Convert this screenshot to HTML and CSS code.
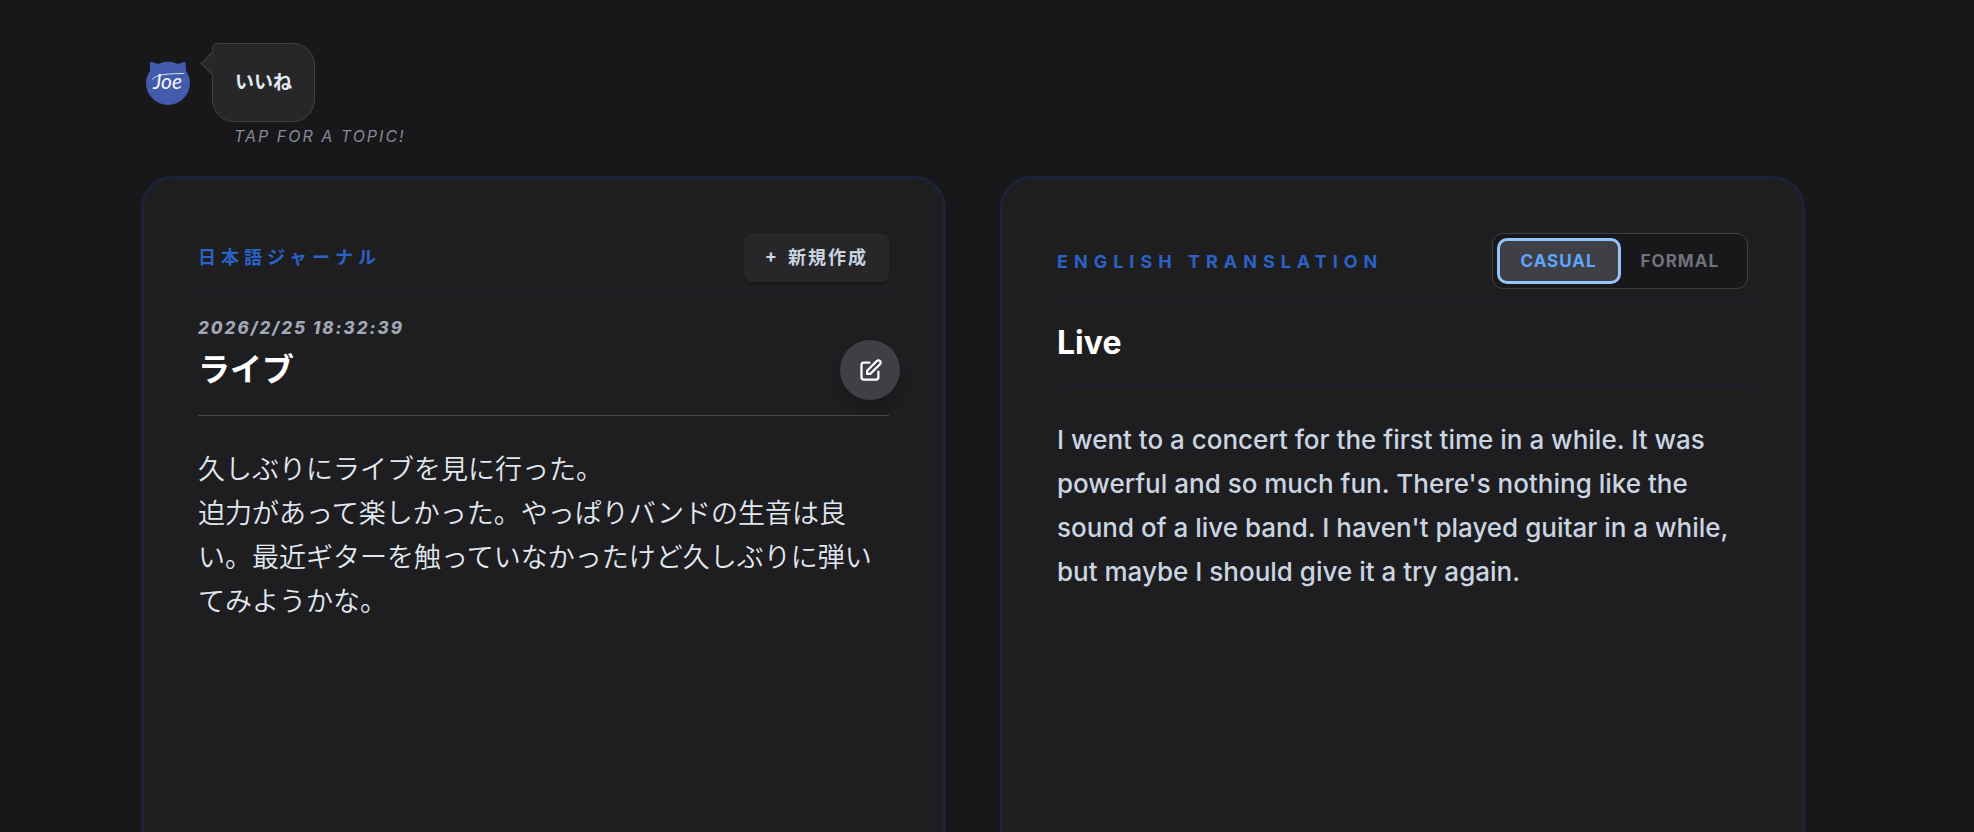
FILE: index.html
```
<!DOCTYPE html>
<html lang="ja">
<head>
<meta charset="utf-8">
<meta name="viewport" content="width=device-width, initial-scale=1">
<title>日本語ジャーナル</title>
<link rel="stylesheet" href="styles.css">
</head>
<body>
<div class="app">
  <header class="prompt">
    <svg class="avatar" viewBox="0 0 46 46" role="img" aria-label="Joe">
      <path class="avatar-face" d="M5 2Q9 2 13 4Q23-1 33 4Q37 2 40.500 2L41 11Q45 17 45 23A22 22 0 0 1 1 23Q1 17 5 11Z"/>
      <path class="avatar-stroke" d="M7.500 19Q11 15.500 19 14.500T39 13.500"/>
      <text class="avatar-name" x="8" y="29">Joe</text>
    </svg>
    <div class="prompt-body">
      <button class="bubble" type="button">いいね</button>
      <p class="hint">TAP FOR A TOPIC!</p>
    </div>
  </header>

  <main class="panels">
    <section class="card">
      <div class="card-head">
        <h2 class="label label-ja">日本語ジャーナル</h2>
        <button class="new-entry" type="button"><span>+</span><span>新規作成</span></button>
      </div>
      <div class="entry-head">
        <time class="date">2026/2/25 18:32:39</time>
        <div class="title-row">
          <h1 class="title">ライブ</h1>
          <button class="edit" type="button" aria-label="編集">
            <svg viewBox="0 0 24 24" aria-hidden="true"><path d="M11 5H6a2 2 0 0 0-2 2v11a2 2 0 0 0 2 2h11a2 2 0 0 0 2-2v-5m-1.414-9.414a2 2 0 1 1 2.828 2.828L11.828 15H9v-2.828z"/></svg>
          </button>
        </div>
      </div>
      <p class="text text-ja">久しぶりにライブを見に行った。<br>迫力があって楽しかった。やっぱりバンドの生音は良い。最近ギターを触っていなかったけど久しぶりに弾いてみようかな。</p>
    </section>

    <section class="card" lang="en">
      <div class="card-head">
        <h2 class="label label-en">ENGLISH TRANSLATION</h2>
        <div class="toggle">
          <button class="option option-active" type="button" aria-pressed="true">CASUAL</button>
          <button class="option" type="button" aria-pressed="false">FORMAL</button>
        </div>
      </div>
      <div class="entry-head entry-head-en">
        <h1 class="title">Live</h1>
      </div>
      <p class="text text-en">I went to a concert for the first time in a while. It was powerful and so much fun. There's nothing like the sound of a live band. I haven't played guitar in a while, but maybe I should give it a try again.</p>
    </section>
  </main>
</div>
</body>
</html>
```
FILE: styles.css
```
* { box-sizing: border-box; }

body {
  margin: 0;
  height: 100vh;
  overflow-x: hidden;
  overflow-y: auto;
  scrollbar-width: none;
  padding-right: 28px;
  background: #18181a;
  color: #e2e8f0;
  font-family: Inter, "Noto Sans CJK JP", sans-serif;
}

h1, h2, p { margin: 0; }

button {
  border: 0;
  font: inherit;
  color: inherit;
  cursor: pointer;
}

.app {
  max-width: 1664px;
  margin: 0 auto;
  padding-top: 43px;
}

/* Topic prompt */
.prompt {
  display: flex;
  align-items: flex-start;
  gap: 21px;
  padding-left: 4px;
}

.avatar {
  width: 46px;
  height: 46px;
  margin-top: 17px;
}

.avatar-face { fill: #425bad; }

.avatar-stroke {
  fill: none;
  stroke: #dbe4f3;
  stroke-width: 1;
  stroke-linecap: round;
}

.avatar-name {
  fill: #f1f5f9;
  font: italic 400 21px Lato, sans-serif;
}

.bubble {
  position: relative;
  display: block;
  height: 79px;
  padding: 0 22px 4px;
  background: #27272a;
  border: 1px solid #3f3f46;
  border-radius: 5px 22px 22px 22px;
  font-size: 19px;
  font-weight: 700;
}

.bubble::before {
  content: "";
  position: absolute;
  left: -9px;
  top: 11px;
  width: 16px;
  height: 16px;
  background: #27272a;
  border: solid #3f3f46;
  border-width: 0 0 1px 1px;
  transform: rotate(45deg);
}

.hint {
  margin-top: 3px;
  padding-left: 22px;
  color: #858a96;
  font-size: 16px;
  font-style: italic;
  font-weight: 400;
  letter-spacing: 2px;
  line-height: 22px;
}

/* Journal panels */
.panels {
  display: grid;
  grid-template-columns: 1fr 1fr;
  gap: 54px;
  margin-top: 29px;
}

.card {
  min-height: 800px;
  padding: 54px;
  background: #1e1e20;
  border: 3px solid #1c2338;
  border-radius: 32px;
}

.card-head {
  display: flex;
  align-items: center;
  justify-content: space-between;
  padding-bottom: 11px;
  border-bottom: 1px solid #1c2438;
}

.label {
  color: #2b62c6;
  font-size: 18px;
  font-weight: 700;
  letter-spacing: 5px;
}

.label-ja { padding-bottom: 4px; }

.label-en { letter-spacing: 6px; }

.new-entry {
  display: flex;
  align-items: center;
  gap: 9px;
  height: 49px;
  padding: 0 21px 4px;
  background: #27272a;
  border-radius: 8px;
  box-shadow: 0 2px 3px #0003;
  color: #cbd5e1;
  font-size: 18px;
  font-weight: 700;
  letter-spacing: 2px;
}

.toggle {
  display: flex;
  padding: 6px;
  background: #18181a;
  border: 1px solid #3f3f46;
  border-radius: 11px;
}

.option {
  height: 42px;
  padding: 0 22px;
  background: transparent;
  border-radius: 8px;
  color: #71717a;
  font-size: 17px;
  font-weight: 700;
  letter-spacing: 1px;
}

.option-active {
  background: #3f3f46;
  color: #60a5fa;
  outline: 3px solid #93c5fd;
  outline-offset: -1px;
}

.entry-head {
  padding: 22px 0 15px;
  border-bottom: 1px solid #48484f;
}

.entry-head-en {
  padding: 22px 0;
  border-color: #1c2438;
}

.date {
  display: block;
  color: #a1a7b5;
  font-size: 17px;
  font-style: italic;
  font-weight: 800;
  letter-spacing: 2px;
  line-height: 24px;
}

.title-row {
  display: flex;
  align-items: center;
  justify-content: space-between;
}

.title {
  color: #fff;
  font-size: 32px;
  font-weight: 700;
  line-height: 40px;
}

.edit {
  display: grid;
  place-items: center;
  width: 60px;
  height: 60px;
  margin-right: -11px;
  padding: 0;
  background: #3f3f46;
  border-radius: 50%;
  box-shadow: 0 8px 12px #0003;
  color: #fff;
}

.edit svg {
  width: 27px;
  height: 27px;
  fill: none;
  stroke: currentColor;
  stroke-width: 2;
  stroke-linecap: round;
  stroke-linejoin: round;
}

.text {
  margin-top: 32px;
  font-size: 27px;
  line-height: 44px;
}

.text-ja { font-weight: 350; }

.text-en {
  color: #cbd5e1;
  font-size: 26px;
  font-weight: 500;
}
```
